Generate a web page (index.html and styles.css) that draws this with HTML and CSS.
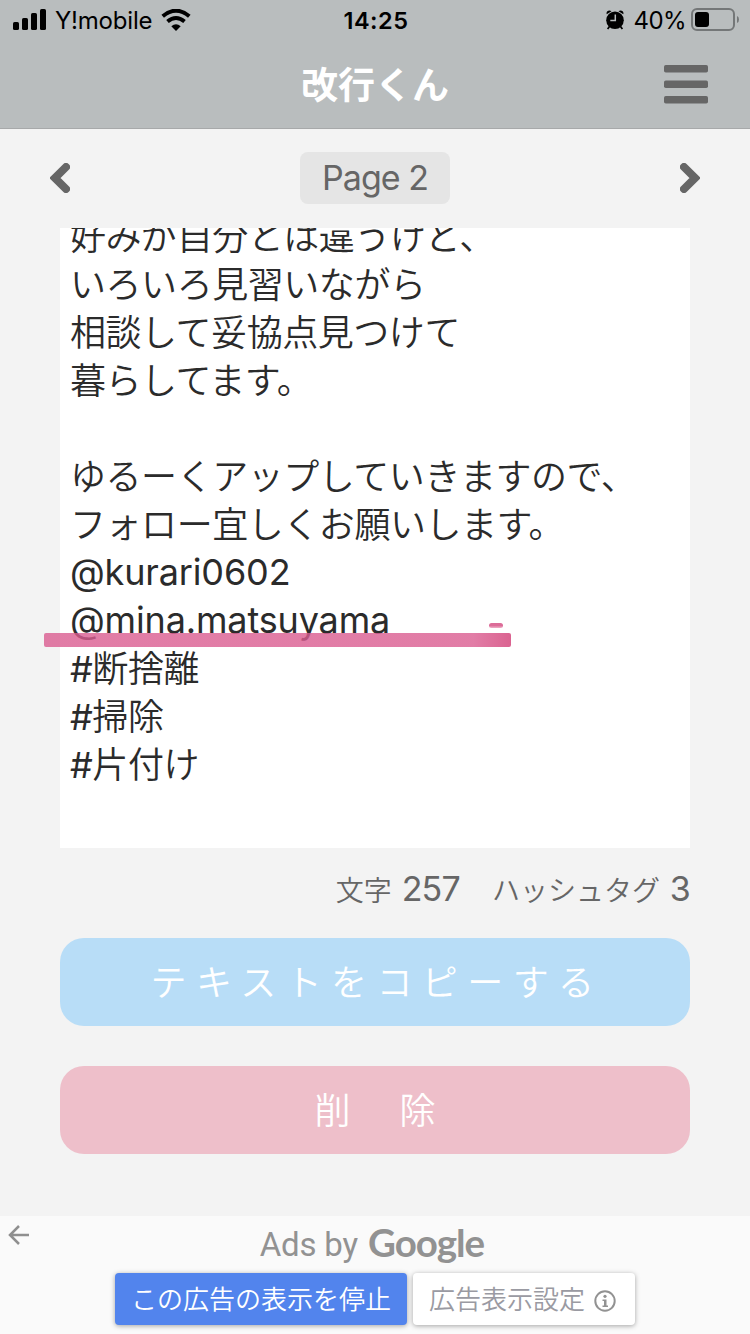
FILE: index.html
```html
<!DOCTYPE html>
<html lang="ja">
<head>
<meta charset="utf-8">
<title>改行くん</title>
<link rel="stylesheet" href="styles.css">
</head>
<body>
<div class="app">
  <header class="header">
    <div class="status">
      <div class="status-left">
        <svg class="signal" width="34" height="22" viewBox="0 0 34 22"><rect x="0" y="13" width="6" height="8" rx="1.6"/><rect x="9" y="9" width="6" height="12" rx="1.6"/><rect x="18" y="4" width="6" height="17" rx="1.6"/><rect x="27" y="0" width="6" height="21" rx="1.6"/></svg>
        <span class="carrier">Y!mobile</span>
        <svg class="wifi" width="30" height="22" viewBox="0 0 30 22"><path d="M1.7 7.2Q15-3.8 28.300 7.200" fill="none" stroke="#000" stroke-width="4"/><path d="M6.500 12.500Q15 5.500 23.500 12.500" fill="none" stroke="#000" stroke-width="4"/><path d="M10.300 17.200Q15 13.400 19.700 17.200L15 22Z"/></svg>
      </div>
      <time class="clock">14:25</time>
      <div class="status-right">
        <svg class="alarm" width="18" height="20" viewBox="0 0 18 20"><circle cx="9" cy="10.300" r="8.800"/><path d="M.7 4.300C-.2 1.200 3 -.5 5.500 1.200ZM17.300 4.300C18.200 1.200 15 -.5 12.500 1.200Z"/><path d="M3.500 16.500 1.600 19M14.500 16.500 16.400 19" stroke="#000" stroke-width="1.700"/><path d="M9.300 4.500V10.500H4.300" fill="none" stroke="#b9bdbe" stroke-width="1.500"/></svg>
        <span class="percent">40%</span>
        <svg class="battery" width="48" height="24" viewBox="0 0 48 24"><rect x="1" y="1" width="42" height="21" rx="5" fill="none" stroke="#747778" stroke-width="2"/><rect x="4" y="4" width="14" height="15" rx="3"/><path d="M46 8q2 .8 2 3.500t-2 3.500Z" fill="#747778"/></svg>
      </div>
    </div>
    <div class="titlebar">
      <h1 class="title">改行くん</h1>
      <svg class="menu" width="44" height="39" viewBox="0 0 44 39"><g fill="#666"><rect y="0" width="44" height="7.500" rx="1.800"/><rect y="15.500" width="44" height="7.500" rx="1.800"/><rect y="31" width="44" height="7.500" rx="1.800"/></g></svg>
    </div>
  </header>
  <main class="main">
    <nav class="pager">
      <svg width="20" height="30" viewBox="0 0 20 30"><path d="M16 4 5 15 16 26" class="chevron"/></svg>
      <span class="page-label">Page 2</span>
      <svg width="20" height="30" viewBox="0 0 20 30"><path d="M4 4 15 15 4 26" class="chevron"/></svg>
    </nav>
    <section class="editor">
      <div class="lines">
        <p>好みが自分とは違うけど、</p>
        <p>いろいろ見習いながら</p>
        <p>相談して妥協点見つけて</p>
        <p>暮らしてます。</p>
        <p>&nbsp;</p>
        <p>ゆるーくアップしていきますので、</p>
        <p>フォロー宜しくお願いします。</p>
        <p class="latin">@kurari0602</p>
        <p class="latin">@mina.matsuyama</p>
        <p><span class="hash">#</span>断捨離</p>
        <p><span class="hash">#</span>掃除</p>
        <p><span class="hash">#</span>片付け</p>
      </div>
      <div class="marker"></div>
      <div class="marker-dot"></div>
    </section>
    <div class="counts">
      <span>文字 <b class="num">257</b></span>
      <span>ハッシュタグ <b class="num">3</b></span>
    </div>
    <button class="btn copy">テキストをコピーする</button>
    <button class="btn delete"><span>削</span><span>除</span></button>
  </main>
  <footer class="ad">
    <svg class="back" width="22" height="20" viewBox="0 0 22 20"><path d="M21 10H2M11 1 2 10 11 19" fill="none" stroke="#8f8f8f" stroke-width="2.500"/></svg>
    <div class="ads-by"><span class="ads-text">Ads by</span><span class="google">Google</span></div>
    <div class="ad-actions">
      <button class="ad-btn stop">この広告の表示を停止</button>
      <button class="ad-btn settings"><span>広告表示設定</span><svg width="22" height="22" viewBox="0 0 22 22"><circle cx="11" cy="11" r="9.700" fill="none" stroke="#929292" stroke-width="2"/><circle cx="11" cy="6.300" r="1.600" fill="#929292"/><path d="M8.500 9.500H12.500V15.500H14V17H8.500V15.500H10V11H8.500Z" fill="#929292"/></svg></button>
    </div>
  </footer>
</div>
</body>
</html>
```

FILE: styles.css
```css
* { box-sizing: border-box; }

body {
  margin: 0;
  background: #f3f3f3;
  font-family: Inter, "Noto Sans CJK JP", sans-serif;
  color: #2b2b2b;
}

.app {
  width: 750px;
  height: 1334px;
  display: flex;
  flex-direction: column;
  overflow: hidden;
}

.header {
  height: 129px;
  background: #b9bdbe;
  border-bottom: 1px solid #a7a9aa;
}

.status {
  height: 40px;
  display: grid;
  grid-template-columns: 1fr auto 1fr;
  align-items: center;
  padding: 0 11px 0 13px;
  color: #000;
}

.status-left, .status-right { display: flex; align-items: center; }
.status-right { justify-content: flex-end; }
.carrier { margin-left: 8px; font-size: 24px; letter-spacing: -0.2px; width: 98px; white-space: nowrap; }
.wifi { margin-left: 8px; }
.clock { font-size: 23.500px; font-weight: 600; letter-spacing: 0.5px; line-height: 28px; padding-top: 1px; }
.percent { margin: 0 5px 0 10px; font-size: 24px; letter-spacing: -0.6px; }

.titlebar {
  height: 88px;
  display: grid;
  grid-template-columns: 1fr auto 1fr;
  align-items: center;
  padding: 0 42px;
}

.title {
  grid-column: 2;
  margin: 0;
  padding-top: 4px;
  color: #fff;
  font-size: 37px;
  line-height: 54px;
  font-weight: 700;
}

.menu { justify-self: end; }

.main {
  flex: 1;
  display: flex;
  flex-direction: column;
  padding: 0 60px;
}

.pager {
  height: 99px;
  display: flex;
  align-items: center;
  justify-content: space-between;
  margin: 0 -10px;
  padding-bottom: 1px;
}

.chevron {
  fill: none;
  stroke: #666;
  stroke-width: 8;
  stroke-linecap: round;
}

.page-label {
  width: 150px;
  height: 52px;
  border-radius: 8px;
  background: #e5e5e5;
  color: #666;
  font-size: 34px;
  line-height: 52px;
  text-align: center;
  letter-spacing: -1px;
}

.editor {
  position: relative;
  height: 620px;
  background: #fff;
}

.lines {
  height: 620px;
  overflow: hidden;
  padding-left: 10px;
  font-size: 36px;
  font-weight: 350;
  letter-spacing: -0.45px;
}

.lines p { margin: 0; height: 48px; line-height: 50px; white-space: nowrap; }
.lines p:first-child { margin-top: -16px; }
.lines .latin { font-weight: 400; letter-spacing: -0.15px; line-height: 48px; }
.hash { font-weight: 400; }

.marker {
  position: absolute;
  left: -16px;
  top: 405px;
  width: 467px;
  height: 14px;
  border-radius: 2px;
  background: linear-gradient(90deg, rgba(218, 92, 144, .8) 0, rgba(218, 92, 144, .8) 92%, rgba(212, 72, 125, .85));
}

.marker-dot {
  position: absolute;
  left: 429px;
  top: 395px;
  width: 14px;
  height: 5px;
  border-radius: 3px;
  background: linear-gradient(#dc6c98 50%, #efb0c8);
}

.counts {
  height: 90px;
  display: flex;
  align-items: center;
  justify-content: flex-end;
  gap: 32px;
  padding-bottom: 9px;
  color: #666;
  font-size: 28px;
  font-weight: 350;
  white-space: nowrap;
}

.num { font-size: 34px; font-weight: 400; letter-spacing: -0.8px; margin-left: 2px; }

.btn {
  height: 88px;
  flex: none;
  border: 0;
  border-radius: 24px;
  padding: 0 0 4px;
  color: #fff;
  font: 350 36px/84px "Noto Sans CJK JP", sans-serif;
}

.copy { background: #b8ddf7; letter-spacing: 9.400px; text-indent: 4px; }
.delete { margin-top: 40px; background: #eebfca; display: flex; justify-content: center; gap: 49px; }

.ad {
  position: relative;
  height: 118px;
  flex: none;
  background: #fafafa;
  display: flex;
  flex-direction: column;
  align-items: center;
}

.back { position: absolute; left: 8px; top: 9px; }

.ads-by {
  height: 57px;
  display: flex;
  align-items: flex-start;
  gap: 10px;
  padding-right: 6px;
  color: #929292;
}

.ads-text { font: 33px/57px Roboto, sans-serif; letter-spacing: -0.2px; }
.google { font: 700 38.500px/52px Lato, sans-serif; letter-spacing: -1px; }

.ad-actions { display: flex; gap: 6px; }

.ad-btn {
  height: 52px;
  border: 0;
  border-radius: 4px;
  padding: 0 0 2px;
  box-shadow: 0 1px 5px rgba(0, 0, 0, .35);
  font: 350 26px/50px "Noto Sans CJK JP", sans-serif;
  white-space: nowrap;
}

.stop { width: 292px; background: #5284ed; color: #fff; }

.settings {
  width: 222px;
  display: flex;
  align-items: center;
  justify-content: center;
  gap: 9px;
  padding-right: 3px;
  background: #fff;
  color: #9a9aa2;
}

.settings svg { margin-top: 5px; }
```
